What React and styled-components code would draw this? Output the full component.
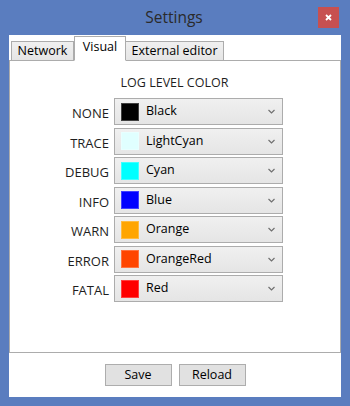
import React from "react";
import styled, { createGlobalStyle } from "styled-components";

const GlobalStyle = createGlobalStyle`
  html, body {
    margin: 0;
    padding: 0;
    background: #5a7dbf;
  }
  body {
    font-family: "Open Sans", "Noto Sans", sans-serif;
  }
`;

const levels = [
  { label: "NONE", name: "Black", color: "#000000" },
  { label: "TRACE", name: "LightCyan", color: "#e0ffff" },
  { label: "DEBUG", name: "Cyan", color: "#00ffff" },
  { label: "INFO", name: "Blue", color: "#0000ff" },
  { label: "WARN", name: "Orange", color: "#ffa500" },
  { label: "ERROR", name: "OrangeRed", color: "#ff4500" },
  { label: "FATAL", name: "Red", color: "#ff0000" },
];

const Window = styled.div`
  width: 350px;
  height: 406px;
  box-sizing: border-box;
  background: #5a7dbf;
  display: flex;
  flex-direction: column;
  padding: 0 9px 9px 9px;
`;

const TitleBar = styled.div`
  height: 35px;
  display: grid;
  grid-template-columns: 1fr auto 1fr;
  align-items: center;
  margin: 0 -9px;
  padding: 0 11px 0 9px;
`;

const Title = styled.div`
  grid-column: 2;
  font-size: 15.5px;
  color: #2a2a2a;
  padding-bottom: 1px;
`;

const CloseButton = styled.div`
  grid-column: 3;
  justify-self: end;
  align-self: start;
  margin-top: 7px;
  width: 21px;
  height: 21px;
  background: #c75050;
  display: flex;
  align-items: center;
  justify-content: center;
`;

const Client = styled.div`
  flex: 1;
  background: #ffffff;
  display: flex;
  flex-direction: column;
`;

const TabStrip = styled.div`
  height: 26px;
  display: flex;
  align-items: flex-end;
  padding-left: 2px;
  margin-bottom: -1px;
  position: relative;
  z-index: 1;
`;

const Tab = styled.div`
  box-sizing: border-box;
  width: ${(p) => p.$w}px;
  height: ${(p) => (p.$active ? 25 : 20)}px;
  border: 1px solid #acacac;
  border-left-width: ${(p) => (p.$first || p.$active ? 1 : 0)}px;
  border-bottom-color: ${(p) => (p.$active ? "#ffffff" : "#acacac")};
  background: ${(p) =>
    p.$active ? "#ffffff" : "linear-gradient(#f0f0f0, #e5e5e5)"};
  font-size: 12.5px;
  color: #000;
  display: flex;
  justify-content: center;
  align-items: ${(p) => (p.$active ? "flex-start" : "center")};
  padding-top: ${(p) => (p.$active ? 4 : 0)}px;
  line-height: 1;
`;

const Panel = styled.div`
  height: 291px;
  border: 1px solid #acacac;
  display: flex;
  flex-direction: column;
  align-items: flex-start;
`;

const Header = styled.div`
  align-self: center;
  margin-top: 14px;
  font-size: 12.5px;
  line-height: 16px;
  color: #1e1e1e;
  padding-right: 1px;
`;

const LevelGrid = styled.div`
  margin-top: 7px;
  display: grid;
  grid-template-columns: 99px 169px;
  column-gap: 5px;
  row-gap: 2.5px;
`;

const Label = styled.div`
  text-align: right;
  font-size: 13px;
  color: #1e1e1e;
  line-height: 27px;
  padding-top: 2px;
  height: 27px;
  box-sizing: border-box;
`;

const Combo = styled.div`
  box-sizing: border-box;
  height: 27px;
  border: 1px solid #acacac;
  background: linear-gradient(#f0f0f0, #e5e5e5);
  display: flex;
  align-items: center;
  padding: 0 7px 0 6px;
`;

const Swatch = styled.div`
  width: 18px;
  height: 18px;
  box-sizing: border-box;
  background: ${(p) => p.$color};
  box-shadow: inset 0 0 0 1px rgba(255, 255, 255, 0.25);
`;

const ComboText = styled.div`
  flex: 1;
  margin-left: 7px;
  font-size: 12.5px;
  color: #000;
  padding-bottom: 2px;
`;

const Footer = styled.div`
  flex: 1;
  display: flex;
  justify-content: center;
  align-items: center;
  gap: 7px;
  padding-bottom: 1px;
`;

const Button = styled.div`
  box-sizing: border-box;
  width: 67px;
  height: 22px;
  background: #e1e1e1;
  border: 1px solid #adadad;
  font-size: 12.5px;
  color: #000;
  display: flex;
  align-items: center;
  justify-content: center;
  padding-bottom: 1px;
`;

const Chevron = () => (
  <svg width="7" height="5" viewBox="0 0 7 5">
    <polyline points="0.5,1 3.5,4 6.5,1" fill="none" stroke="#707070" strokeWidth="1.2" />
  </svg>
);

const CloseGlyph = () => (
  <svg width="7" height="7" viewBox="0 0 7 7">
    <path d="M1 1 L6 6 M6 1 L1 6" stroke="#ffffff" strokeWidth="1.8" />
  </svg>
);

export default function App() {
  return (
    <>
      <GlobalStyle />
      <Window>
        <TitleBar>
          <Title>Settings</Title>
          <CloseButton>
            <CloseGlyph />
          </CloseButton>
        </TitleBar>
        <Client>
          <TabStrip>
            <Tab $w={63} $first>Network</Tab>
            <Tab $w={52} $active>Visual</Tab>
            <Tab $w={98}>External editor</Tab>
          </TabStrip>
          <Panel>
            <Header>LOG LEVEL COLOR</Header>
            <LevelGrid>
              {levels.map((l) => (
                <React.Fragment key={l.label}>
                  <Label>{l.label}</Label>
                  <Combo>
                    <Swatch $color={l.color} />
                    <ComboText>{l.name}</ComboText>
                    <Chevron />
                  </Combo>
                </React.Fragment>
              ))}
            </LevelGrid>
          </Panel>
          <Footer>
            <Button>Save</Button>
            <Button>Reload</Button>
          </Footer>
        </Client>
      </Window>
    </>
  );
}
